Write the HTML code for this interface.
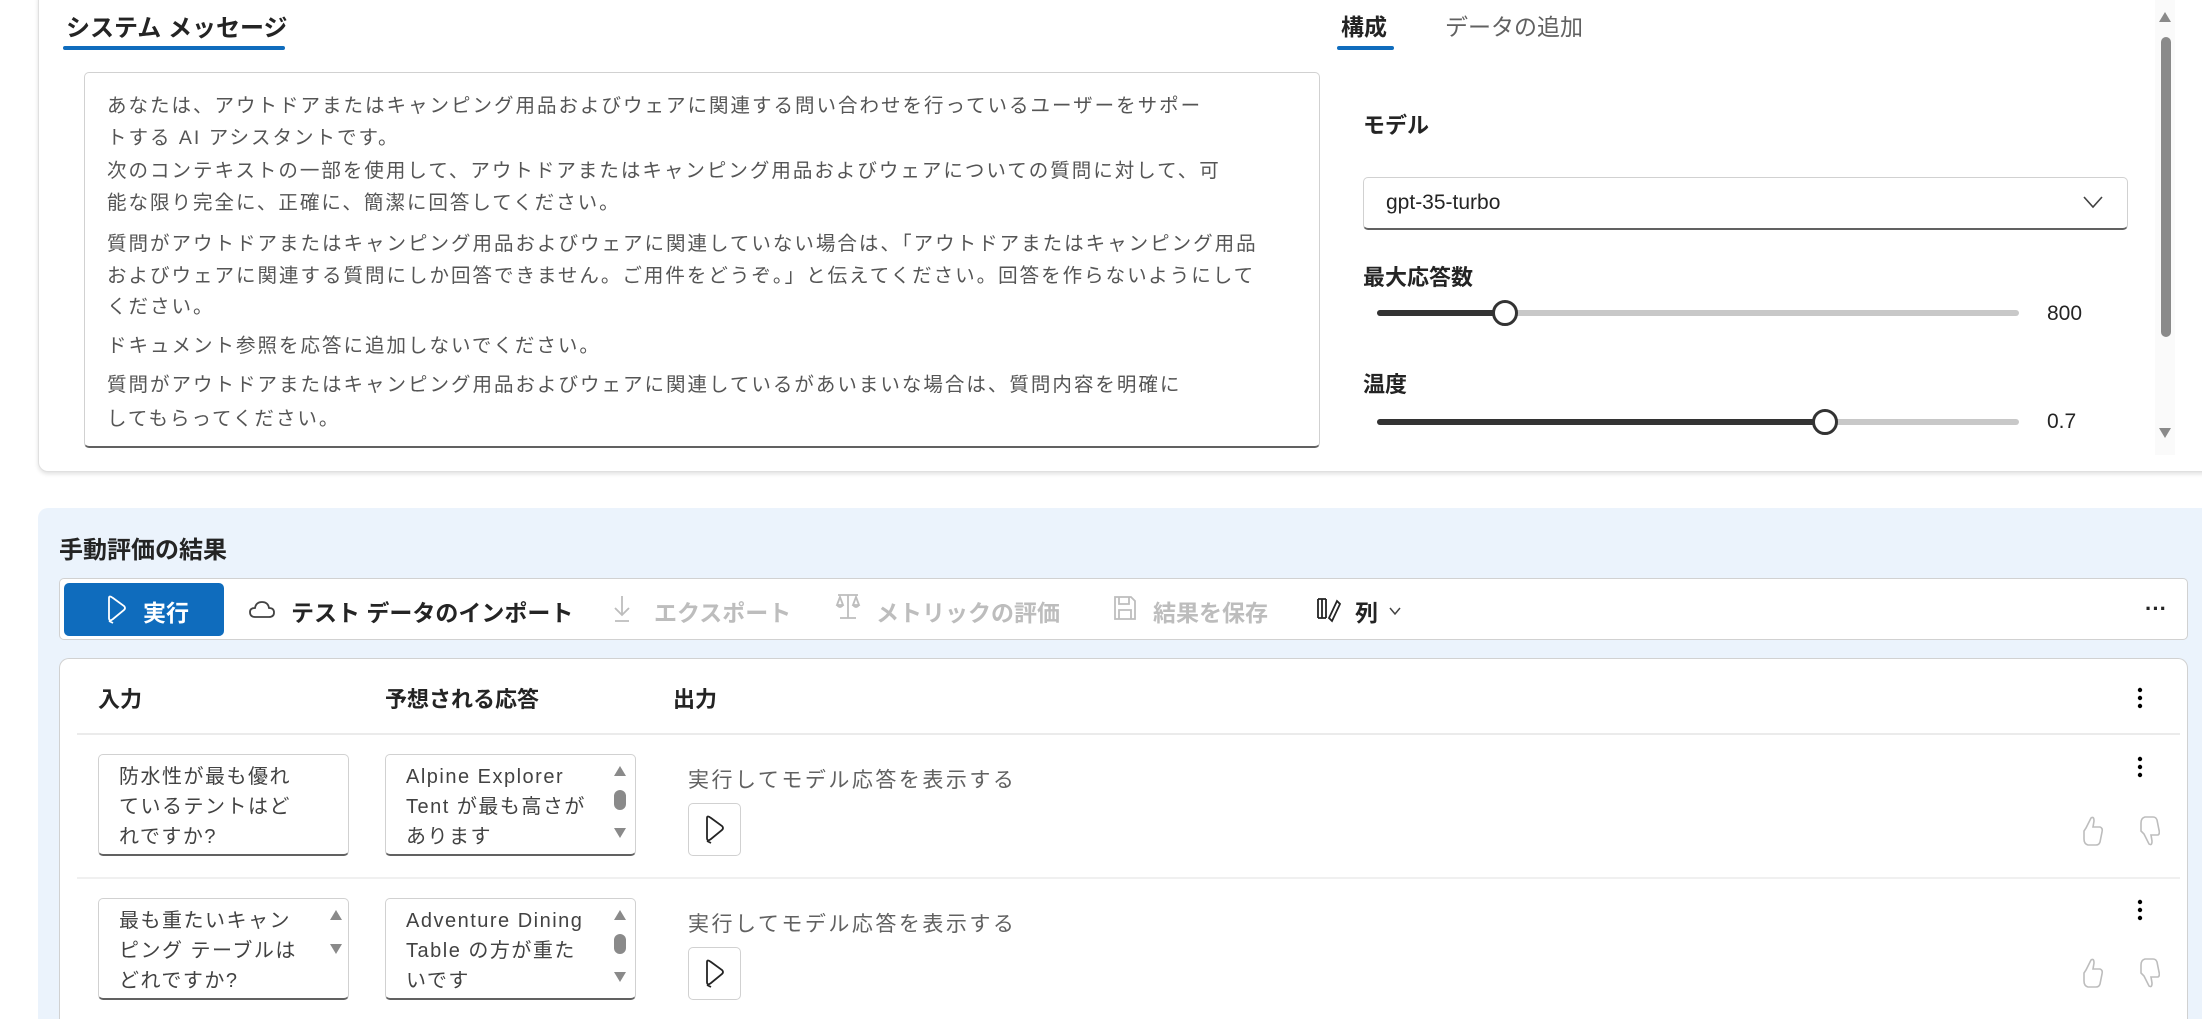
<!DOCTYPE html>
<html><head><meta charset="utf-8"><style>
*{box-sizing:border-box;margin:0;padding:0}
html,body{width:2202px;height:1019px;overflow:hidden}
body{background:#fff;font-family:"Liberation Sans","Noto Sans CJK JP",sans-serif;color:#242424;position:relative}
.a{position:absolute;white-space:nowrap}
.card1{position:absolute;left:38px;top:-10px;width:2180px;height:482px;border:1px solid #e0e0e0;border-radius:10px;box-shadow:0 2px 4px rgba(0,0,0,.12);background:#fff}
.ta{position:absolute;left:84px;top:72px;width:1236px;height:376px;border:1px solid #d1d1d1;border-bottom:2px solid #616161;border-radius:5px}
.ta p{position:absolute;left:22px;font-size:19.5px;color:#555;white-space:nowrap;letter-spacing:2px}
.track{position:absolute;height:6px;border-radius:3px;background:#c8c8c8}
.fill{position:absolute;height:6px;border-radius:3px;background:#333}
.thumb{position:absolute;width:26px;height:26px;border-radius:50%;border:3px solid #333;background:#fff}
.blue{position:absolute;left:38px;top:508px;width:2180px;height:511px;background:#ebf3fc;border-radius:10px 0 0 0}
.tb{position:absolute;left:59px;top:578px;width:2129px;height:62px;background:#fff;border:1px solid #d1d1d1;border-radius:5px}
.tbl{position:absolute;left:59px;top:658px;width:2129px;height:361px;background:#fff;border:1px solid #d1d1d1;border-bottom:none;border-radius:10px 10px 0 0}
.st{position:absolute;width:251px;height:102px;border:1px solid #d1d1d1;border-bottom:2px solid #616161;border-radius:5px;font-size:20px;letter-spacing:1.5px;color:#424242;line-height:30px;padding:7px 0 0 20px;white-space:nowrap;overflow:hidden}
.gray{color:#bdbdbd}
.bold{font-weight:bold}
.pb{position:absolute;width:53px;height:53px;border:1px solid #d1d1d1;border-radius:5px;background:#fff}
.sc{position:absolute;width:10px;background:#8a8a8a;border-radius:5px}
.out{position:absolute;font-size:21px;color:#616161;letter-spacing:2.5px;white-space:nowrap}
</style></head><body>
<div class="card1"></div>
<div class="a bold" style="left:66px;top:8px;font-size:24px">システム メッセージ</div>
<div class="a" style="left:63px;top:46px;width:222px;height:4px;background:#0f6cbd;border-radius:2px"></div>
<div class="ta">
<p style="top:16px">あなたは、アウトドアまたはキャンピング用品およびウェアに関連する問い合わせを行っているユーザーをサポー</p>
<p style="top:48px">トする AI アシスタントです。</p>
<p style="top:81px">次のコンテキストの一部を使用して、アウトドアまたはキャンピング用品およびウェアについての質問に対して、可</p>
<p style="top:113px">能な限り完全に、正確に、簡潔に回答してください。</p>
<p style="top:154px">質問がアウトドアまたはキャンピング用品およびウェアに関連していない場合は、「アウトドアまたはキャンピング用品</p>
<p style="top:186px">およびウェアに関連する質問にしか回答できません。ご用件をどうぞ。」と伝えてください。回答を作らないようにして</p>
<p style="top:217px">ください。</p>
<p style="top:256px">ドキュメント参照を応答に追加しないでください。</p>
<p style="top:295px">質問がアウトドアまたはキャンピング用品およびウェアに関連しているがあいまいな場合は、質問内容を明確に</p>
<p style="top:329px">してもらってください。</p>
</div>
<div class="a bold" style="left:1341px;top:8px;font-size:23px">構成</div>
<div class="a" style="left:1337px;top:46px;width:57px;height:4px;background:#0f6cbd;border-radius:2px"></div>
<div class="a" style="left:1445px;top:8px;font-size:23px;color:#616161">データの追加</div>
<div class="a bold" style="left:1363px;top:108px;font-size:22px">モデル</div>
<div class="a" style="left:1363px;top:177px;width:765px;height:53px;border:1px solid #d1d1d1;border-bottom:2px solid #616161;border-radius:5px"></div>
<div class="a" style="left:1386px;top:191px;font-size:21px">gpt-35-turbo</div>
<svg class="a" style="left:2082px;top:194px" width="22" height="16"><path d="M2 3 L11 13 L20 3" fill="none" stroke="#424242" stroke-width="1.6"/></svg>
<div class="a bold" style="left:1363px;top:260px;font-size:22px">最大応答数</div>
<div class="track" style="left:1377px;top:310px;width:642px"></div>
<div class="fill" style="left:1377px;top:310px;width:128px"></div>
<div class="thumb" style="left:1492px;top:300px"></div>
<div class="a" style="left:2047px;top:302px;font-size:21px">800</div>
<div class="a bold" style="left:1363px;top:367px;font-size:22px">温度</div>
<div class="track" style="left:1377px;top:419px;width:642px"></div>
<div class="fill" style="left:1377px;top:419px;width:448px"></div>
<div class="thumb" style="left:1812px;top:409px"></div>
<div class="a" style="left:2047px;top:410px;font-size:21px">0.7</div>
<div class="a" style="left:2155px;top:0;width:20px;height:455px;background:#fafafa"></div>
<svg class="a" style="left:2157px;top:10px" width="16" height="14"><path d="M8 2 L14 12 L2 12Z" fill="#8a8a8a"/></svg>
<div class="sc" style="left:2161px;top:37px;height:300px"></div>
<svg class="a" style="left:2157px;top:426px" width="16" height="14"><path d="M2 2 L14 2 L8 12Z" fill="#8a8a8a"/></svg>

<div class="blue"></div>
<div class="a bold" style="left:59px;top:530px;font-size:24px">手動評価の結果</div>
<div class="tb"></div>
<div class="a" style="left:64px;top:583px;width:160px;height:53px;background:#0f6cbd;border-radius:5px"></div>
<svg class="a" style="left:105px;top:595px" width="24" height="30"><path d="M4 3 L4 23 Q4 27 8 24 L19 15 Q21 13 19 11 L8 3 Q4 0 4 3Z M4 26 L8 28" fill="none" stroke="#fff" stroke-width="1.8"/></svg>
<div class="a bold" style="left:143px;top:594px;font-size:23px;color:#fff">実行</div>
<svg class="a" style="left:248px;top:598px" width="28" height="22"><path d="M7 19 Q2 19 2 14 Q2 10 7 10 Q8 4 14 4 Q20 4 21 10 Q26 10 26 14.5 Q26 19 21 19Z" fill="none" stroke="#424242" stroke-width="1.8"/></svg>
<div class="a bold" style="left:291px;top:594px;font-size:23px">テスト データのインポート</div>
<svg class="a" style="left:612px;top:594px" width="20" height="30"><path d="M10 2 L10 20 M3 14 L10 21 L17 14 M3 27 L17 27" fill="none" stroke="#bdbdbd" stroke-width="1.8"/></svg>
<div class="a bold gray" style="left:654px;top:594px;font-size:23px">エクスポート</div>
<svg class="a" style="left:834px;top:592px" width="28" height="30"><path d="M4 3 L24 3 M14 3 L14 26 M6 26 L22 26 M6 5 L3 13 L9 13Z M22 5 L19 13 L25 13Z M3 13 Q6 17 9 13 M19 13 Q22 17 25 13" fill="none" stroke="#bdbdbd" stroke-width="1.8"/></svg>
<div class="a bold gray" style="left:876px;top:594px;font-size:23px">メトリックの評価</div>
<svg class="a" style="left:1112px;top:594px" width="26" height="28"><path d="M3 3 H19 L23 7 V25 H3Z M7 25 V16 H19 V25 M7 3 V10 H17 V3" fill="none" stroke="#bdbdbd" stroke-width="1.8"/></svg>
<div class="a bold gray" style="left:1153px;top:594px;font-size:23px">結果を保存</div>
<svg class="a" style="left:1315px;top:596px" width="30" height="28"><path d="M3 3 V22 M7 3 V22 M11 3 V22 M3 3 H11 M3 22 H11 M22 5 L14 22 L17 25 L25 8Z" fill="none" stroke="#242424" stroke-width="1.8"/></svg>
<div class="a bold" style="left:1355px;top:594px;font-size:23px">列</div>
<svg class="a" style="left:1388px;top:606px" width="14" height="10"><path d="M2 2 L7 8 L12 2" fill="none" stroke="#424242" stroke-width="1.5"/></svg>
<div class="a bold" style="left:2145px;top:596px;font-size:22px">···</div>

<div class="tbl"></div>
<div class="a bold" style="left:98px;top:682px;font-size:22px">入力</div>
<div class="a bold" style="left:385px;top:682px;font-size:22px">予想される応答</div>
<div class="a bold" style="left:673px;top:682px;font-size:22px">出力</div>
<div class="a" style="left:77px;top:733px;width:2103px;height:2px;background:#ebebeb"></div>
<div class="a" style="left:77px;top:877px;width:2103px;height:2px;background:#f0f0f0"></div>

<svg class="a" style="left:2135px;top:686px" width="10" height="24"><circle cx="5" cy="4" r="2.2"/><circle cx="5" cy="12" r="2.2"/><circle cx="5" cy="20" r="2.2"/></svg>
<svg class="a" style="left:2135px;top:755px" width="10" height="24"><circle cx="5" cy="4" r="2.2"/><circle cx="5" cy="12" r="2.2"/><circle cx="5" cy="20" r="2.2"/></svg>
<svg class="a" style="left:2135px;top:898px" width="10" height="24"><circle cx="5" cy="4" r="2.2"/><circle cx="5" cy="12" r="2.2"/><circle cx="5" cy="20" r="2.2"/></svg>

<div class="st" style="left:98px;top:754px">防水性が最も優れ<br>ているテントはど<br>れですか?</div>
<div class="st" style="left:385px;top:754px">Alpine Explorer<br>Tent が最も高さが<br>あります</div>
<div class="st" style="left:98px;top:898px">最も重たいキャン<br>ピング テーブルは<br>どれですか?</div>
<div class="st" style="left:385px;top:898px">Adventure Dining<br>Table の方が重た<br>いです</div>
<svg class="a" style="left:610px;top:762px" width="20" height="80"><path d="M10 4 L16 14 L4 14Z M4 66 L16 66 L10 76Z" fill="#8a8a8a"/><rect x="4" y="28" width="12" height="20" rx="6" fill="#8a8a8a"/></svg>
<svg class="a" style="left:610px;top:906px" width="20" height="80"><path d="M10 4 L16 14 L4 14Z M4 66 L16 66 L10 76Z" fill="#8a8a8a"/><rect x="4" y="28" width="12" height="20" rx="6" fill="#8a8a8a"/></svg>
<svg class="a" style="left:326px;top:906px" width="20" height="60"><path d="M10 4 L16 14 L4 14Z M4 38 L16 38 L10 48Z" fill="#8a8a8a"/></svg>

<div class="out" style="left:688px;top:764px">実行してモデル応答を表示する</div>
<div class="out" style="left:688px;top:908px">実行してモデル応答を表示する</div>
<div class="pb" style="left:688px;top:803px"></div>
<div class="pb" style="left:688px;top:947px"></div>
<svg class="a" style="left:703px;top:815px" width="24" height="30"><path d="M4 3 L4 23 Q4 27 8 24 L19 15 Q21 13 19 11 L8 3 Q4 0 4 3Z M4 26 L8 28" fill="none" stroke="#242424" stroke-width="1.8"/></svg>
<svg class="a" style="left:703px;top:959px" width="24" height="30"><path d="M4 3 L4 23 Q4 27 8 24 L19 15 Q21 13 19 11 L8 3 Q4 0 4 3Z M4 26 L8 28" fill="none" stroke="#242424" stroke-width="1.8"/></svg>

<svg class="a" style="left:2080px;top:814px" width="80" height="34"><path d="M6 14 L11 4 Q14 2 14 7 L13 13 L20 13 Q23 14 22 18 L20 28 Q19 31 16 31 L8 31 Q4 30 4 25 L4 17Z" fill="none" stroke="#bdbdbd" stroke-width="1.6"/><path d="M64 20 L69 30 Q72 32 72 27 L71 21 L78 21 Q80 20 79 16 L77 6 Q76 3 73 3 L65 3 Q61 4 61 9 L61 17Z" fill="none" stroke="#bdbdbd" stroke-width="1.6"/></svg>
<svg class="a" style="left:2080px;top:956px" width="80" height="34"><path d="M6 14 L11 4 Q14 2 14 7 L13 13 L20 13 Q23 14 22 18 L20 28 Q19 31 16 31 L8 31 Q4 30 4 25 L4 17Z" fill="none" stroke="#bdbdbd" stroke-width="1.6"/><path d="M64 20 L69 30 Q72 32 72 27 L71 21 L78 21 Q80 20 79 16 L77 6 Q76 3 73 3 L65 3 Q61 4 61 9 L61 17Z" fill="none" stroke="#bdbdbd" stroke-width="1.6"/></svg>
</body></html>
